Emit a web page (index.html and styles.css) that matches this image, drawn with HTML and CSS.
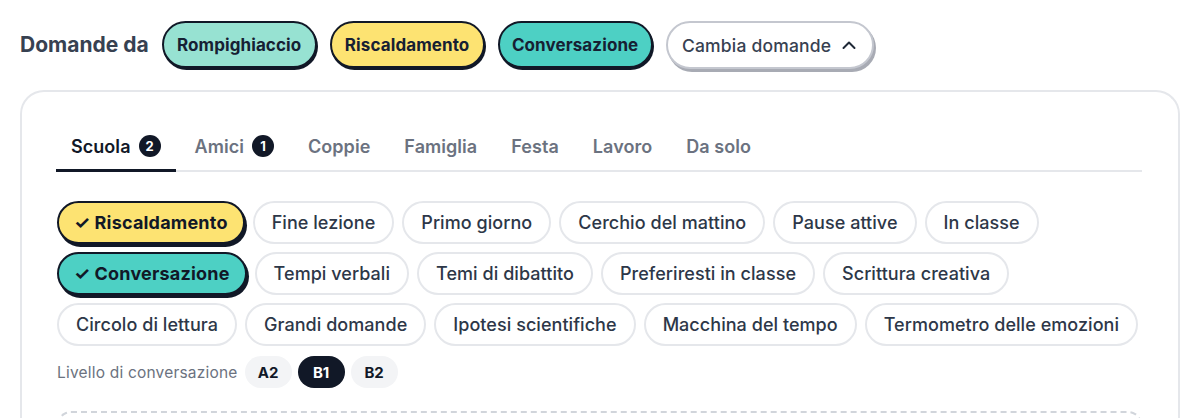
FILE: index.html
```html
<!DOCTYPE html>
<html lang="it">
<head>
<meta charset="utf-8">
<link rel="stylesheet" href="styles.css">
</head>
<body>
<div class="top">
  <span class="top-label">Domande da</span>
  <span class="pill pill-mint">Rompighiaccio</span>
  <span class="pill pill-yellow">Riscaldamento</span>
  <span class="pill pill-teal">Conversazione</span>
  <button class="change">Cambia domande
    <svg width="16" height="16" viewBox="0 0 16 16"><path d="M2.5 11 8 5.5l5.5 5.5" fill="none" stroke="#1f2937" stroke-width="2" stroke-linecap="round" stroke-linejoin="round"/></svg>
  </button>
</div>
<div class="card">
  <div class="tabs">
    <div class="tab active">Scuola <span class="badge">2</span></div>
    <div class="tab">Amici <span class="badge">1</span></div>
    <div class="tab">Coppie</div>
    <div class="tab">Famiglia</div>
    <div class="tab">Festa</div>
    <div class="tab">Lavoro</div>
    <div class="tab">Da solo</div>
  </div>
  <div class="chips">
    <div class="chip-row">
      <span class="chip chip-yellow">✓ Riscaldamento</span>
      <span class="chip">Fine lezione</span>
      <span class="chip">Primo giorno</span>
      <span class="chip">Cerchio del mattino</span>
      <span class="chip">Pause attive</span>
      <span class="chip">In classe</span>
    </div>
    <div class="chip-row">
      <span class="chip chip-teal">✓ Conversazione</span>
      <span class="chip">Tempi verbali</span>
      <span class="chip">Temi di dibattito</span>
      <span class="chip">Preferiresti in classe</span>
      <span class="chip">Scrittura creativa</span>
    </div>
    <div class="chip-row">
      <span class="chip">Circolo di lettura</span>
      <span class="chip">Grandi domande</span>
      <span class="chip">Ipotesi scientifiche</span>
      <span class="chip">Macchina del tempo</span>
      <span class="chip">Termometro delle emozioni</span>
    </div>
  </div>
  <div class="level">
    <span class="level-label">Livello di conversazione</span>
    <span class="lvl">A2</span>
    <span class="lvl on">B1</span>
    <span class="lvl">B2</span>
  </div>
  <div class="dashed"></div>
</div>
</body>
</html>
```
FILE: styles.css
```css
* { box-sizing: border-box; }
html, body { margin: 0; padding: 0; background: #fff; }
body {
  font-family: Inter, "Noto Sans", sans-serif;
  color: #1f2937;
  height: 418px;
  overflow: hidden;
}
.top {
  display: flex;
  align-items: flex-start;
  gap: 13px;
  padding: 21px 20px 0 20px;
  height: 90px;
}
.top-label {
  font-size: 21px;
  font-weight: 700;
  color: #374151;
  margin-top: 11px;
}
.pill {
  height: 47px;
  width: 155px;
  border: 2px solid #111827;
  border-radius: 999px;
  display: flex;
  align-items: center;
  justify-content: center;
  font-size: 17px;
  font-weight: 700;
  letter-spacing: 0.1px;
  color: #162033;
  box-shadow: 1px 2px 0 #111827;
}
.pill-mint { background: #97e2d2; }
.pill-yellow { background: #fde372; }
.pill-teal { background: #4dd0c4; }
.change {
  height: 48px;
  width: 208px;
  padding: 0;
  white-space: nowrap;
  border: 2px solid #c4c7cf;
  border-radius: 999px;
  background: #fff;
  box-shadow: 2px 3px 0 #a8abb4;
  font-family: inherit;
  font-size: 17.5px;
  font-weight: 500;
  letter-spacing: 0.2px;
  color: #374151;
  display: flex;
  align-items: center;
  justify-content: center;
  gap: 10px;
}
.card {
  margin: 0 20px;
  border: 2px solid #e5e7eb;
  border-bottom: none;
  border-radius: 24px 24px 0 0;
  padding: 32px 36px 0 35px;
  height: 328px;
  overflow: hidden;
}
.tabs {
  display: flex;
  gap: 4px;
  border-bottom: 2px solid #e5e7eb;
  margin-left: -1px;
}
.tab {
  padding: 11px 15px 12px;
  font-size: 18px;
  font-weight: 600;
  letter-spacing: 0.05px;
  color: #6b7280;
  display: flex;
  align-items: center;
  gap: 8px;
  margin-bottom: -2px;
  border-bottom: 3px solid transparent;
}
.tab.active { color: #111827; border-bottom-color: #111827; }
.badge {
  width: 22px;
  height: 22px;
  border-radius: 50%;
  background: #111827;
  color: #fff;
  font-size: 13px;
  font-weight: 700;
  letter-spacing: 0;
  display: inline-flex;
  align-items: center;
  justify-content: center;
}
.chips {
  display: flex;
  flex-direction: column;
  gap: 8px;
  margin-top: 29px;
}
.chip-row {
  display: flex;
  gap: 8px;
}
.chip {
  height: 43px;
  padding: 0 17px;
  border: 2px solid #e5e7eb;
  border-radius: 999px;
  display: flex;
  align-items: center;
  font-size: 18px;
  font-weight: 500;
  letter-spacing: 0.05px;
  color: #2d3748;
  white-space: nowrap;
}
.chip-yellow, .chip-teal {
  border-color: #111827;
  color: #111827;
  font-weight: 700;
  letter-spacing: 0.2px;
  box-shadow: 2px 3px 0 #111827;
  padding: 0 15px;
}
.chip-yellow { background: #fde372; }
.chip-teal { background: #4dd0c4; }
.level {
  display: flex;
  align-items: center;
  gap: 6px;
  margin-top: 10px;
}
.level-label {
  font-size: 15.5px;
  letter-spacing: 0.2px;
  color: #6b7280;
  margin-right: 1px;
}
.lvl {
  width: 47px;
  height: 32px;
  border-radius: 999px;
  background: #f3f4f6;
  display: flex;
  align-items: center;
  justify-content: center;
  font-size: 15px;
  font-weight: 700;
  color: #111827;
}
.lvl.on { background: #111827; color: #fff; }
.dashed {
  margin-top: 23px;
  height: 40px;
  border: 2px dashed #d1d5db;
  border-radius: 14px;
}
```
